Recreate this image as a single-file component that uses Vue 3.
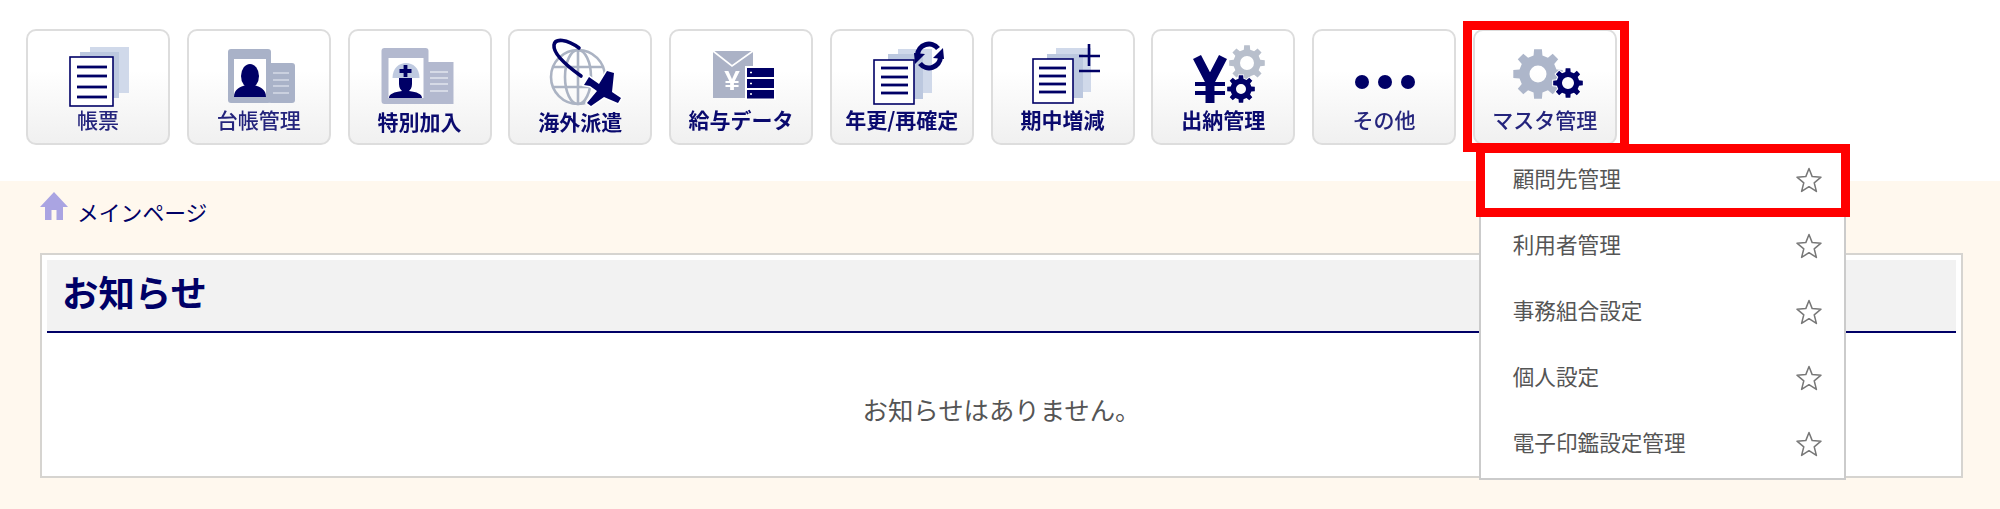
<script setup>
const NAVY = "#000066";

// 歯車のパスを計算で作る
function gear(cx, cy, r, hole, teeth = 8) {
  const inner = r * 0.76;
  const step = (Math.PI * 2) / teeth;
  const pts = [];
  for (let i = 0; i < teeth; i++) {
    const a = i * step;
    const w = step * 0.2;
    const w2 = step * 0.3;
    pts.push([a - w2, inner], [a - w, r], [a + w, r], [a + w2, inner]);
  }
  const d = pts
    .map(([a, rad], i) => {
      const x = (cx + Math.sin(a) * rad).toFixed(2);
      const y = (cy - Math.cos(a) * rad).toFixed(2);
      return `${i === 0 ? "M" : "L"}${x},${y}`;
    })
    .join(" ");
  return `${d} Z M${cx - hole},${cy} a${hole},${hole} 0 1 0 ${hole * 2},0 a${hole},${hole} 0 1 0 ${-hole * 2},0 Z`;
}

const buttons = [
  {
    label: "帳票",
    icon: "stack",
    weak: true,
    stack: {
      back: [61, 15, 39, 46],
      mid: [51, 20, 39, 46],
      front: [41, 25, 43, 49],
      lineX: [48, 78],
      lineY: [35, 44, 55, 65],
    },
  },
  { label: "台帳管理", icon: "card", weak: true },
  { label: "特別加入", icon: "helmet", low: true },
  { label: "海外派遣", icon: "globe", low: true },
  { label: "給与データ", icon: "pay" },
  {
    label: "年更/再確定",
    icon: "stack",
    stack: {
      back: [65, 17, 34, 44],
      mid: [55, 22, 35, 45],
      front: [41, 28, 40, 44],
      lineX: [48, 75],
      lineY: [36, 45, 53, 61],
    },
    extra: "refresh",
  },
  {
    label: "期中増減",
    icon: "stack",
    stack: {
      back: [62, 16, 35, 44],
      mid: [53, 22, 36, 44],
      front: [39, 27, 40, 44],
      lineX: [45, 72],
      lineY: [36, 44, 52, 60],
    },
    extra: "plusminus",
  },
  { label: "出納管理", icon: "yen" },
  { label: "その他", icon: "dots", weak: true },
  { label: "マスタ管理", icon: "gears", weak: true },
];

const menuItems = ["顧問先管理", "利用者管理", "事務組合設定", "個人設定", "電子印鑑設定管理"];
</script>

<template>
  <div class="page">
    <nav class="toolbar">
      <div v-for="b in buttons" :key="b.label" class="tool">
        <button class="tool-btn">
          <svg class="tool-icon" viewBox="-1 -1 140 77" width="140" height="77">
            <template v-if="b.icon === 'stack'">
              <rect :x="b.stack.back[0]" :y="b.stack.back[1]" :width="b.stack.back[2]" :height="b.stack.back[3]" fill="#d0d9ea" />
              <rect :x="b.stack.mid[0]" :y="b.stack.mid[1]" :width="b.stack.mid[2]" :height="b.stack.mid[3]" fill="#bcc8df" />
              <rect :x="b.stack.front[0]" :y="b.stack.front[1]" :width="b.stack.front[2]" :height="b.stack.front[3]" fill="#fff" :stroke="NAVY" stroke-width="1.6" />
              <line v-for="y in b.stack.lineY" :key="y" :x1="b.stack.lineX[0]" :x2="b.stack.lineX[1]" :y1="y" :y2="y" :stroke="NAVY" stroke-width="2.8" />
            </template>
            <template v-if="b.extra === 'refresh'">
              <path d="M84.5,23 A11.5,11.5 0 0 1 105,16.5" fill="none" :stroke="NAVY" stroke-width="5" />
              <path d="M110,16 L111,27 L100,26 Z" :fill="NAVY" />
              <path d="M107.5,25 A11.5,11.5 0 0 1 87,31.5" fill="none" :stroke="NAVY" stroke-width="5" />
              <path d="M82,32 L81,21 L92,22 Z" :fill="NAVY" />
            </template>
            <template v-if="b.extra === 'plusminus'">
              <path d="M85,24 H106 M95,12 V34 M85,39 H106" fill="none" :stroke="NAVY" stroke-width="2.6" />
            </template>

            <template v-if="b.icon === 'card'">
              <rect x="38" y="17" width="43" height="54" rx="3" fill="#a9b2c8" />
              <rect x="78" y="31" width="27" height="40" rx="3" fill="#a9b2c8" />
              <rect x="44" y="27" width="32" height="38" fill="#fff" />
              <ellipse cx="60" cy="44" rx="9" ry="12" :fill="NAVY" />
              <path d="M44,65 C44,57 50,55 56,53 H64 C70,55 76,57 76,65 Z" :fill="NAVY" />
              <path d="M83,41 H99 M83,48 H99 M83,54 H99 M83,61 H99" stroke="#d5dae6" stroke-width="1.6" />
            </template>

            <template v-if="b.icon === 'helmet'">
              <rect x="30.5" y="16" width="47" height="56" rx="3" fill="#b3b9cf" />
              <rect x="74" y="30" width="28.5" height="42" fill="#b3b9cf" />
              <rect x="37.5" y="26" width="35" height="40" fill="#fff" />
              <path d="M48,46 H61 V52 C61,56 59,58 58,59 C66,60 71,62 71,66 H38 C38,62 43,60 51,59 C50,58 48,56 48,52 Z" :fill="NAVY" />
              <path d="M41.5,46 C41.5,26 68.5,26 68.5,46 Z" fill="#bfcae0" />
              <path d="M54.5,33 V45 M48.5,39 H60.5" :stroke="NAVY" stroke-width="3.8" />
              <path d="M79,40 H97 M79,46 H97 M79,52 H97 M79,59 H97" stroke="#e2e5ee" stroke-width="1.6" />
            </template>

            <template v-if="b.icon === 'globe'">
              <g fill="none" stroke="#abb3c3" stroke-width="2.6">
                <circle cx="67" cy="45" r="27" />
                <ellipse cx="67" cy="45" rx="13" ry="27" />
                <path d="M67,18 V72 M42,35 H92 M42,55 H92" />
              </g>
              <path d="M70,44 C56,34 42,22 43,13 C44,6 56,7 68,16" fill="none" :stroke="NAVY" stroke-width="3.6" stroke-linecap="round" />
              <path d="M96,39 L103,41 L101,60 L110,66 L107,71 L93,65 L80,74 L76,71 L86,59 L79,54 L73,53 L78,45 L88,52 Z" fill="#fff" stroke="#fff" stroke-width="3" />
              <path d="M96,39 L103,41 L101,60 L110,66 L107,71 L93,65 L80,74 L76,71 L86,59 L79,54 L73,53 L78,45 L88,52 Z" :fill="NAVY" />
            </template>

            <template v-if="b.icon === 'pay'">
              <rect x="41" y="19" width="40" height="47" fill="#abb2c6" />
              <path d="M41,19 L60,34 L81,19" fill="none" stroke="#fff" stroke-width="1.6" />
              <text x="60" y="58" class="yen-white">¥</text>
              <g fill="#fff">
                <rect x="73" y="34" width="31" height="34" />
              </g>
              <g :fill="NAVY">
                <rect x="75" y="36" width="27" height="9" />
                <rect x="75" y="47" width="27" height="9" />
                <rect x="75" y="58" width="27" height="8.5" />
              </g>
              <path d="M78,40.5 h2 M78,51.5 h2 M78,62 h2" stroke="#fff" stroke-width="1.6" />
            </template>

            <template v-if="b.icon === 'yen'">
              <path :d="gear(93, 31, 18, 7)" fill="#b8bfcc" fill-rule="evenodd" />
              <path d="M43,25 L56,50 L69,25 M56,50 V71" fill="none" :stroke="NAVY" stroke-width="9" />
              <path d="M41,52 H71 M41,61 H71" fill="none" :stroke="NAVY" stroke-width="4" />
              <path :d="gear(87, 57, 14, 5)" :fill="NAVY" fill-rule="evenodd" stroke="#fff" stroke-width="1.5" paint-order="stroke" />
            </template>

            <template v-if="b.icon === 'dots'">
              <circle cx="47" cy="50" r="7" :fill="NAVY" />
              <circle cx="70" cy="50" r="7" :fill="NAVY" />
              <circle cx="93" cy="50" r="7" :fill="NAVY" />
            </template>

            <template v-if="b.icon === 'gears'">
              <path :d="gear(62, 42, 25, 8.5)" fill="#adb6ca" fill-rule="evenodd" />
              <path :d="gear(92, 51, 15, 6)" :fill="NAVY" fill-rule="evenodd" stroke="#fff" stroke-width="2" paint-order="stroke" />
            </template>
          </svg>
          <span class="tool-label" :class="{ weak: b.weak, low: b.low }">{{ b.label }}</span>
        </button>

        <template v-if="b.label === 'マスタ管理'">
          <ul class="menu">
            <li v-for="item in menuItems" :key="item" class="menu-item">
              <span>{{ item }}</span>
              <svg class="star" viewBox="0 0 26 26" width="26" height="26">
                <path d="M13,1.5 L16.2,9.6 L25,10.2 L18.2,15.8 L20.4,24.4 L13,19.7 L5.6,24.4 L7.8,15.8 L1,10.2 L9.8,9.6 Z" fill="none" stroke="#777" stroke-width="1.5" stroke-linejoin="round" />
              </svg>
            </li>
          </ul>
          <div class="mark mark-btn"></div>
          <div class="mark mark-item"></div>
        </template>
      </div>
    </nav>

    <main class="content">
      <div class="crumb">
        <svg viewBox="0 0 28 28" width="28" height="28">
          <path d="M14,0 L28,15 H23 V28 H16.5 V18 H11.5 V28 H5 V15 H0 Z" fill="#aaa4e2" />
        </svg>
        <span>メインページ</span>
      </div>

      <section class="card">
        <h2 class="card-title">お知らせ</h2>
        <p class="card-body">お知らせはありません。</p>
      </section>
    </main>
  </div>
</template>

<style>
html,
body {
  margin: 0;
  background: #fff;
}

.yen-white {
  font-family: "Liberation Sans", sans-serif;
  font-size: 28px;
  font-weight: 700;
  fill: #fff;
  text-anchor: middle;
}
</style>

<style scoped>
.page {
  width: 2000px;
  height: 509px;
  overflow: hidden;
  display: flex;
  flex-direction: column;
  font-family: "Noto Sans CJK JP", sans-serif;
  color: #555;
}

.toolbar {
  height: 152px;
  padding: 29px 0 0 26px;
  display: flex;
  gap: 16.75px;
  box-sizing: content-box;
  flex: none;
}

.tool {
  position: relative;
  width: 144px;
  height: 116px;
}

.tool-btn {
  width: 144px;
  height: 116px;
  box-sizing: border-box;
  padding: 0;
  display: flex;
  flex-direction: column;
  align-items: center;
  border: 2px solid #dddddd;
  border-radius: 10px;
  background: linear-gradient(#ffffff 35%, #f0f0f0);
  font-family: inherit;
}

.tool-icon {
  display: block;
  flex: none;
  margin-bottom: -1px;
  filter: blur(0.4px);
}

.tool-label {
  height: 24px;
  line-height: 24px;
  font-size: 21px;
  font-weight: 700;
  color: #0a0a6e;
  white-space: nowrap;
  filter: blur(0.4px);
}

.tool-label.weak {
  font-weight: 500;
  color: #24247c;
}

.tool-label.low {
  margin-top: 2px;
}

.menu {
  position: absolute;
  left: 6px;
  top: 118px;
  z-index: 2;
  width: 367px;
  height: 333px;
  box-sizing: border-box;
  margin: 0;
  padding: 0;
  list-style: none;
  background: #fff;
  border: 2px solid #cbcbcb;
  border-top: 0;
}

.menu-item {
  height: 66px;
  padding: 0 22px 0 32px;
  display: flex;
  align-items: center;
  justify-content: space-between;
  font-size: 21.6px;
  color: #555;
}

.menu-item span {
  margin-bottom: 5px;
}

.star {
  flex: none;
}

.mark {
  position: absolute;
  z-index: 3;
  box-sizing: border-box;
  border: 9px solid #ff0000;
}

.mark-btn {
  left: -10px;
  top: -8px;
  width: 166px;
  height: 131px;
}

.mark-item {
  left: 3px;
  top: 115px;
  width: 374px;
  height: 73px;
}

.content {
  flex: 1;
  padding: 11px 37px 0 40px;
  background: #fff8ee;
}

.crumb {
  height: 50px;
  margin-bottom: 11px;
  display: flex;
  align-items: flex-start;
  gap: 9px;
  font-size: 21.8px;
  color: #000066;
}

.crumb span {
  line-height: 28px;
  margin-top: 6px;
}

.card {
  height: 225px;
  box-sizing: border-box;
  padding: 5px;
  background: #fff;
  border: 2px solid #d6d4d0;
}

.card-title {
  height: 73px;
  box-sizing: border-box;
  margin: 0;
  padding-left: 15px;
  line-height: 63px;
  font-size: 36.4px;
  font-weight: 700;
  color: #000066;
  background: #f2f2f2;
  border-bottom: 2px solid #000066;
}

.card-body {
  margin: 0;
  padding-top: 58px;
  line-height: 36px;
  text-align: center;
  font-size: 25.4px;
  color: #555;
}
</style>
